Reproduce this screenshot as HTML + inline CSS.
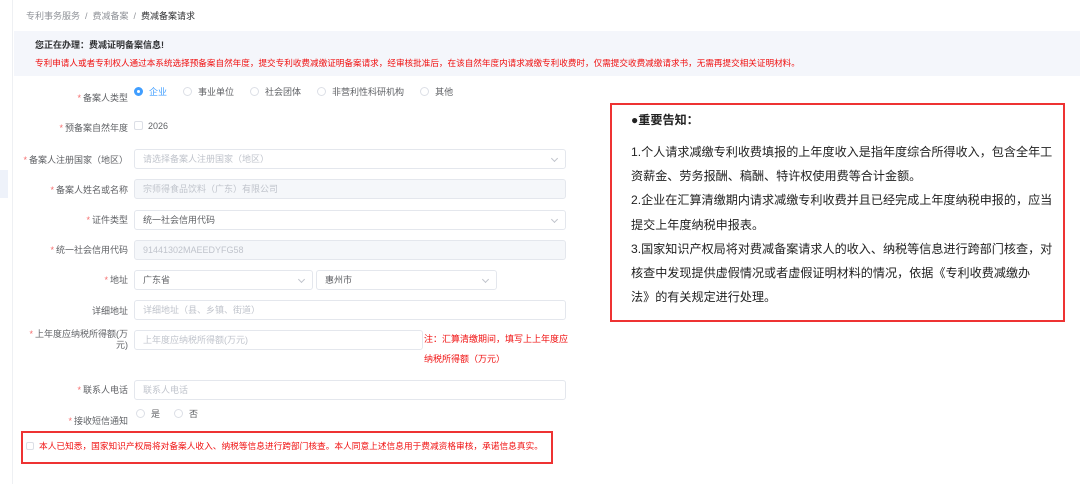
<!DOCTYPE html>
<html><head><meta charset="utf-8"><style>
*{margin:0;padding:0;box-sizing:border-box}
body{width:1080px;height:484px;background:#fff;font-family:"Liberation Sans","Noto Sans CJK SC",sans-serif;position:relative;overflow:hidden;color:#606266}
.a{position:absolute;white-space:nowrap}
.lbl{position:absolute;right:952px;font-size:9px;color:#606266;text-align:right;white-space:nowrap}
.lbl i{color:#f56c6c;font-style:normal;margin-right:2px}
.inp{position:absolute;left:134px;width:432px;height:20px;border:1px solid #e4e7ed;border-radius:3px;font-size:9px;color:#c0c4cc;padding:0 8px;line-height:18px;background:#fff;white-space:nowrap}
.dis{background:#f5f7fa}
.arr{position:absolute;right:8px;top:6px;width:5px;height:5px;border-right:1px solid #c0c4cc;border-bottom:1px solid #c0c4cc;transform:rotate(45deg)}
.rd{display:inline-block;width:9px;height:9px;border:1px solid #dcdfe6;border-radius:50%;vertical-align:-1px;margin-right:6px}
.rdon{border:3px solid #409eff}
.nt{font-size:12.1px;color:#222;line-height:24.2px}
</style></head><body>
<div class="a" style="left:12px;top:0;width:1px;height:484px;background:#eef0f3"></div>
<div class="a" style="left:0;top:170px;width:8px;height:28px;background:#eef2fa"></div>
<div class="a" style="left:26px;top:9px;font-size:9px;color:#909399">专利事务服务 &nbsp;/&nbsp; 费减备案 &nbsp;/&nbsp; <span style="color:#303133">费减备案请求</span></div>
<div class="a" style="left:14px;top:31px;width:1066px;height:45px;background:#f4f6fb"></div>
<div class="a" style="left:35px;top:38px;font-size:9px;color:#303133;font-weight:bold">您正在办理：费减证明备案信息!</div>
<div class="a" style="left:35px;top:57px;font-size:8.6px;color:#f01010">专利申请人或者专利权人通过本系统选择预备案自然年度，提交专利收费减缴证明备案请求，经审核批准后，在该自然年度内请求减缴专利收费时，仅需提交收费减缴请求书，无需再提交相关证明材料。</div>

<div class="lbl" style="top:91px"><i>*</i>备案人类型</div>
<div class="a" style="left:134px;top:85px;font-size:9px;color:#606266"><span class="rd rdon"></span><span style="color:#409eff">企业</span><span style="margin-left:16px" class="rd"></span>事业单位<span style="margin-left:16px" class="rd"></span>社会团体<span style="margin-left:16px" class="rd"></span>非营利性科研机构<span style="margin-left:16px" class="rd"></span>其他</div>
<div class="lbl" style="top:121px"><i>*</i>预备案自然年度</div>
<div class="a" style="left:134px;top:121px;font-size:9px;color:#606266"><span style="display:inline-block;width:9px;height:9px;border:1px solid #dcdfe6;border-radius:2px;vertical-align:-1px;margin-right:5px"></span>2026</div>

<div class="lbl" style="top:153px"><i>*</i>备案人注册国家（地区）</div>
<div class="inp" style="top:149px">请选择备案人注册国家（地区）<span class="arr"></span></div>
<div class="lbl" style="top:183px"><i>*</i>备案人姓名或名称</div>
<div class="inp dis" style="top:179px">宗师得食品饮料（广东）有限公司</div>
<div class="lbl" style="top:213px"><i>*</i>证件类型</div>
<div class="inp" style="top:210px;color:#606266">统一社会信用代码<span class="arr"></span></div>
<div class="lbl" style="top:243px"><i>*</i>统一社会信用代码</div>
<div class="inp dis" style="top:240px">91441302MAEEDYFG58</div>
<div class="lbl" style="top:273px"><i>*</i>地址</div>
<div class="inp" style="top:270px;width:179px;color:#606266">广东省<span class="arr"></span></div>
<div class="inp" style="top:270px;left:316px;width:181px;color:#606266">惠州市<span class="arr"></span></div>
<div class="lbl" style="top:304px">详细地址</div>
<div class="inp" style="top:300px">详细地址（县、乡镇、街道）</div>
<div class="lbl" style="top:329px;line-height:11px"><i>*</i>上年度应纳税所得额(万<br>元)</div>
<div class="inp" style="top:330px;width:289px">上年度应纳税所得额(万元)</div>
<div class="a" style="left:424px;top:329px;font-size:9px;color:#f01010;line-height:20px">注：汇算清缴期间，填写上上年度应<br>纳税所得额（万元）</div>
<div class="lbl" style="top:383px"><i>*</i>联系人电话</div>
<div class="inp" style="top:380px">联系人电话</div>
<div class="lbl" style="top:414px"><i>*</i>接收短信通知</div>
<div class="a" style="left:136px;top:407px;font-size:9px;color:#606266"><span class="rd"></span>是<span style="margin-left:14px" class="rd"></span>否</div>
<div class="a" style="left:21px;top:431px;width:532px;height:33px;border:2px solid #e33;"></div>
<div class="a" style="left:26px;top:439px;font-size:8.7px;color:#f01010"><span style="display:inline-block;width:8px;height:8px;border:1px solid #dcdfe6;border-radius:2px;vertical-align:-1px;margin-right:5px"></span>本人已知悉，国家知识产权局将对备案人收入、纳税等信息进行跨部门核查。本人同意上述信息用于费减资格审核，承诺信息真实。</div>

<div class="a" style="left:610px;top:103px;width:455px;height:219px;border:2px solid #e33"></div>
<div class="a nt" style="left:631px;top:108px;font-weight:bold">●重要告知：</div>
<div class="a nt" style="left:631px;top:140px">1.个人请求减缴专利收费填报的上年度收入是指年度综合所得收入，包含全年工<br>资薪金、劳务报酬、稿酬、特许权使用费等合计金额。<br>2.企业在汇算清缴期内请求减缴专利收费并且已经完成上年度纳税申报的，应当<br>提交上年度纳税申报表。<br>3.国家知识产权局将对费减备案请求人的收入、纳税等信息进行跨部门核查，对<br>核查中发现提供虚假情况或者虚假证明材料的情况，依据《专利收费减缴办<br>法》的有关规定进行处理。</div>
</body></html>
